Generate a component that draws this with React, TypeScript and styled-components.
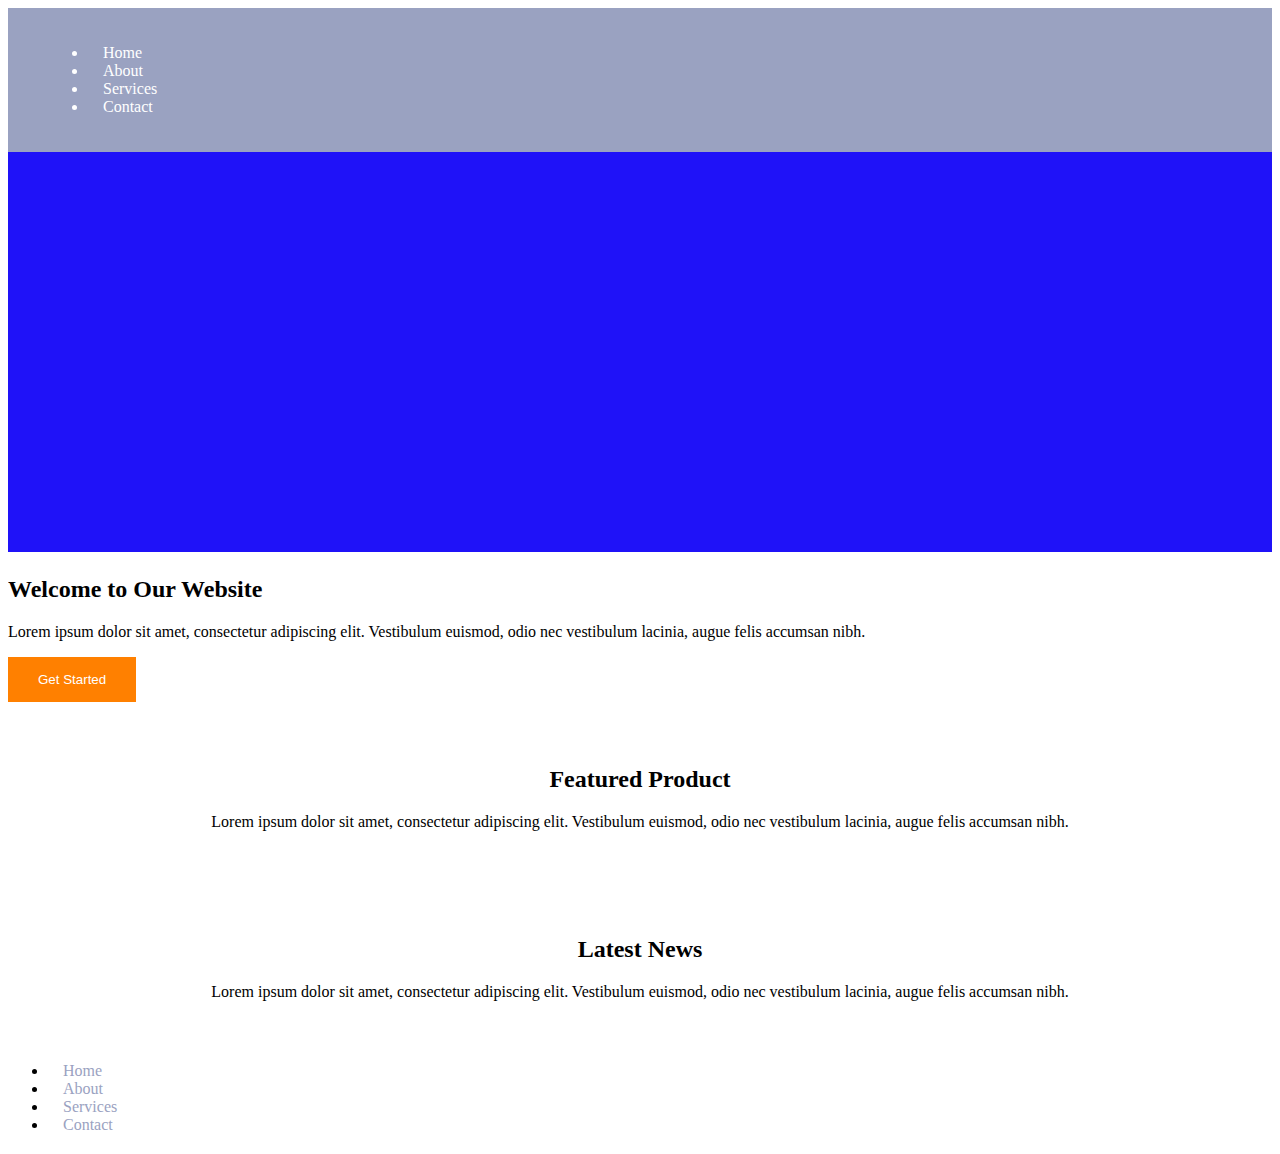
import React from "react";
import styled, { createGlobalStyle } from "styled-components";

const GlobalStyle = createGlobalStyle`
  body {
    margin: 8px;
    font-family: "Liberation Serif", "Times New Roman", serif;
    font-size: 16px;
    color: #000;
    background: #fff;
  }
`;

const Header = styled.header`
  background: #9aa2c1;
  padding: 20px 40px;
`;

const NavList = styled.ul<{ $tone: "light" | "muted" }>`
  margin: 16px 0;
  padding-left: 40px;
  list-style: disc;
  color: ${(p) => (p.$tone === "light" ? "#ffffff" : "#000000")};
`;

const NavItem = styled.li`
  padding-left: 15px;
  line-height: 18px;
`;

const NavLink = styled.a<{ $tone: "light" | "muted" }>`
  color: ${(p) => (p.$tone === "light" ? "#ffffff" : "#9aa2c1")};
  text-decoration: none;
`;

const Hero = styled.div`
  height: 400px;
  background: #1f12f8;
`;

const Intro = styled.section`
  padding-top: 4px;
`;

const Heading = styled.h2`
  font-size: 24px;
  font-weight: bold;
  margin: 20px 0;
`;

const Text = styled.p`
  margin: 16px 0;
  line-height: 18px;
`;

const CtaButton = styled.button`
  display: block;
  box-sizing: border-box;
  background: #ff8000;
  color: #ffffff;
  border: none;
  font-family: "Liberation Sans", Arial, sans-serif;
  font-size: 13.33px;
  white-space: nowrap;
  padding: 0 30px;
  height: 45px;
  cursor: pointer;
`;

const Block = styled.section<{ $top: number; $bottom: number }>`
  text-align: center;
  padding-top: ${(p) => p.$top}px;
  padding-bottom: ${(p) => p.$bottom}px;
`;

const Footer = styled.footer``;

const links = ["Home", "About", "Services", "Contact"];

export default function App() {
  return (
    <>
      <GlobalStyle />
      <Header>
        <nav>
          <NavList $tone="light">
            {links.map((l) => (
              <NavItem key={l}>
                <NavLink $tone="light" href="#">{l}</NavLink>
              </NavItem>
            ))}
          </NavList>
        </nav>
      </Header>
      <Hero />
      <Intro>
        <Heading>Welcome to Our Website</Heading>
        <Text>
          Lorem ipsum dolor sit amet, consectetur adipiscing elit. Vestibulum euismod, odio nec vestibulum lacinia, augue felis accumsan nibh.
        </Text>
        <CtaButton>Get Started</CtaButton>
      </Intro>
      <Block $top={44} $bottom={35}>
        <Heading>Featured Product</Heading>
        <Text>
          Lorem ipsum dolor sit amet, consectetur adipiscing elit. Vestibulum euismod, odio nec vestibulum lacinia, augue felis accumsan nibh.
        </Text>
      </Block>
      <Block $top={34} $bottom={29}>
        <Heading>Latest News</Heading>
        <Text>
          Lorem ipsum dolor sit amet, consectetur adipiscing elit. Vestibulum euismod, odio nec vestibulum lacinia, augue felis accumsan nibh.
        </Text>
      </Block>
      <Footer>
        <NavList $tone="muted">
          {links.map((l) => (
            <NavItem key={l}>
              <NavLink $tone="muted" href="#">{l}</NavLink>
            </NavItem>
          ))}
        </NavList>
      </Footer>
    </>
  );
}
